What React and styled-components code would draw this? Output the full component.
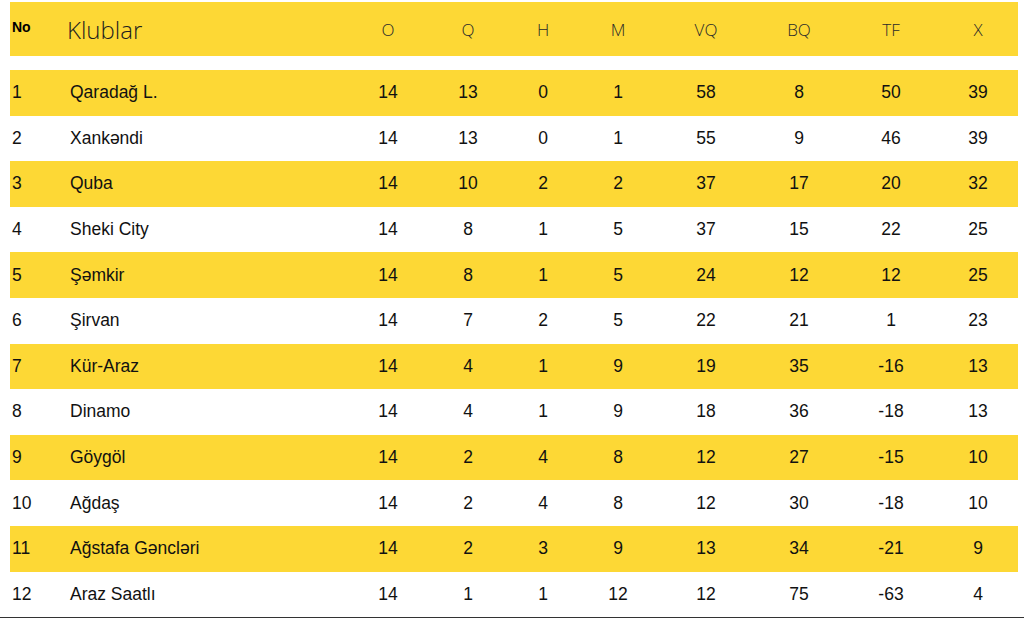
import React from 'react';
import styled, { createGlobalStyle } from 'styled-components';

const GlobalStyle = createGlobalStyle`
    body {
        margin: 0;
        background: #fff;
        font-family: 'Liberation Sans', Arial, sans-serif;
    }
`;

const COLS = '50px 288px 80px 80px 70px 80px 96px 90px 94px 80px';

const Page = styled.div`
    width: 1024px;
    box-sizing: border-box;
    border-bottom: 1px solid #333;
    padding: 2px 6px 0 10px;
    overflow: hidden;
`;

const Table = styled.div`
    width: 1008px;
`;

const HeadRow = styled.div`
    display: grid;
    grid-template-columns: ${COLS};
    align-items: center;
    height: 54px;
    background: #fdd835;
    margin-bottom: 14px;
    color: #333;
`;

const NoHead = styled.div`
    font-family: 'Liberation Sans', Arial, sans-serif;
    font-weight: bold;
    font-size: 14px;
    color: #000;
    padding-left: 2px;
    margin-top: -4px;
`;

const ClubHead = styled.div`
    font-family: 'Open Sans', 'Noto Sans', sans-serif;
    font-weight: 300;
    font-size: 24px;
    padding-left: 7px;
    color: #1e1e1e;
`;

const StatHead = styled.div`
    font-family: 'Open Sans', 'Noto Sans', sans-serif;
    font-weight: 300;
    font-size: 17px;
    text-align: center;
    color: #2a2a2a;
`;

const Row = styled.div`
    display: grid;
    grid-template-columns: ${COLS};
    align-items: center;
    height: 45.6px;
    background: ${p => (p.$odd ? '#fdd835' : '#fff')};
    font-size: 17.5px;
    color: #111;
`;

const Num = styled.div`
    padding-left: 2px;
`;

const Club = styled.div`
    padding-left: 10px;
`;

const Stat = styled.div`
    text-align: center;
`;

const heads = ['O', 'Q', 'H', 'M', 'VQ', 'BQ', 'TF', 'X'];

const rows = [
    ['Qaradağ L.', 14, 13, 0, 1, 58, 8, 50, 39],
    ['Xankəndi', 14, 13, 0, 1, 55, 9, 46, 39],
    ['Quba', 14, 10, 2, 2, 37, 17, 20, 32],
    ['Sheki City', 14, 8, 1, 5, 37, 15, 22, 25],
    ['Şəmkir', 14, 8, 1, 5, 24, 12, 12, 25],
    ['Şirvan', 14, 7, 2, 5, 22, 21, 1, 23],
    ['Kür-Araz', 14, 4, 1, 9, 19, 35, -16, 13],
    ['Dinamo', 14, 4, 1, 9, 18, 36, -18, 13],
    ['Göygöl', 14, 2, 4, 8, 12, 27, -15, 10],
    ['Ağdaş', 14, 2, 4, 8, 12, 30, -18, 10],
    ['Ağstafa Gəncləri', 14, 2, 3, 9, 13, 34, -21, 9],
    ['Araz Saatlı', 14, 1, 1, 12, 12, 75, -63, 4],
];

export default function App() {
    return (
        <Page>
            <GlobalStyle />
            <Table>
                <HeadRow>
                    <NoHead>No</NoHead>
                    <ClubHead>Klublar</ClubHead>
                    { heads.map(h => <StatHead key={h}>{h}</StatHead>) }
                </HeadRow>
                { rows.map((r, i) => (
                    <Row key={r[0]} $odd={i % 2 === 0}>
                        <Num>{i + 1}</Num>
                        <Club>{r[0]}</Club>
                        { r.slice(1).map((v, j) => <Stat key={j}>{v}</Stat>) }
                    </Row>
                )) }
            </Table>
        </Page>
    );
}
